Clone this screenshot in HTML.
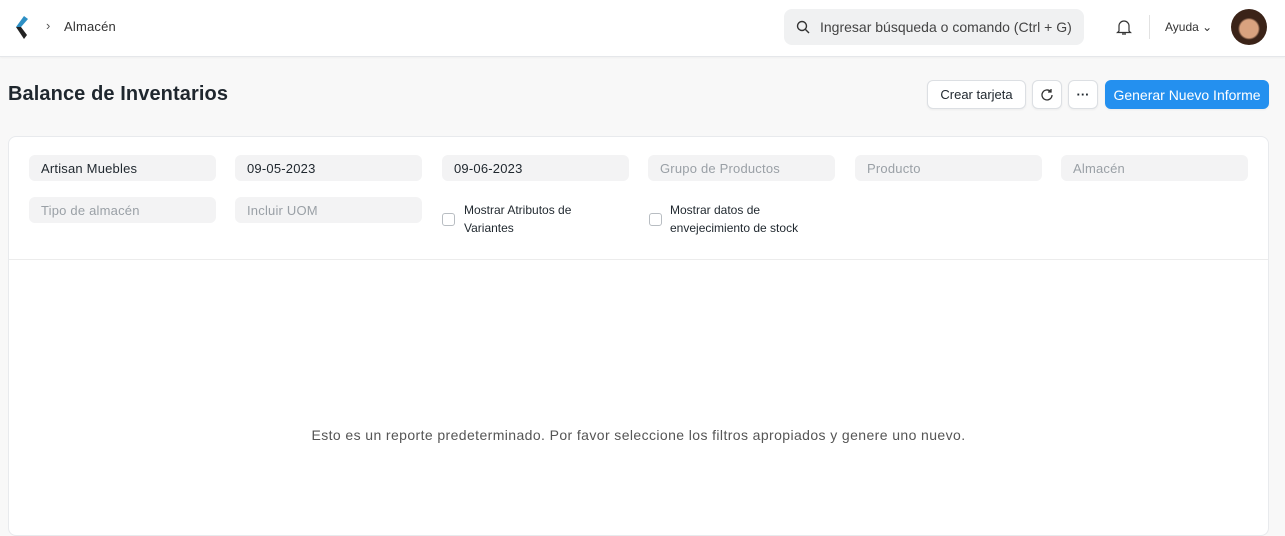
<!DOCTYPE html>
<html><head><meta charset="utf-8"><style>
*{box-sizing:border-box;margin:0;padding:0}
body{width:1285px;height:529px;overflow:hidden;background:#f8f8f8;font-family:"Liberation Sans",sans-serif;color:#1f272e;position:relative}
.nav{position:absolute;left:0;top:0;width:1285px;height:57px;background:#fff;border-bottom:1px solid #e5e7ea;box-shadow:0 1px 2px rgba(0,0,0,.04)}
.abs{position:absolute}
.btn{position:absolute;top:80px;height:29px;background:#fff;border:1px solid #dcdfe3;border-radius:6px;font-size:13px;display:flex;align-items:center;justify-content:center;box-shadow:0 1px 2px rgba(0,0,0,.05)}
.card{position:absolute;left:8px;top:136px;width:1261px;height:400px;background:#fff;border:1px solid #e8eaed;border-radius:8px}
.f{position:absolute;width:187px;height:26px;background:#f3f3f4;border-radius:6px;font-size:13px;padding:6px 12px;color:#9aa0a6;letter-spacing:.2px}
.f.v{color:#1f272e}
.cb{position:absolute;width:13px;height:13px;border:1px solid #b8bdc2;border-radius:3px;background:#fff}
.lbl{position:absolute;font-size:12px;line-height:18px;color:#1f272e}
</style></head><body>
<div class="nav">
<svg class="abs" style="left:13px;top:14px" width="16" height="26" viewBox="0 0 16 26"><path d="M11 2 L15 5 L8 13 L3 13Z" fill="#2d8fc4"/><path d="M3 13 L8 13 L14 21 L11 25Z" fill="#222"/></svg>
<div class="abs" style="left:46px;top:18px;font-size:13px;color:#555">›</div>
<div class="abs" style="left:64px;top:19px;font-size:13px;color:#333;letter-spacing:.2px">Almacén</div>
<div class="abs" style="left:784px;top:9px;width:300px;height:36px;background:#f0f1f2;border-radius:8px"></div>
<svg class="abs" style="left:796px;top:20px" width="14" height="14" viewBox="0 0 14 14"><circle cx="6" cy="6" r="4.5" fill="none" stroke="#333" stroke-width="1.4"/><path d="M9.5 9.5 L13 13" stroke="#333" stroke-width="1.4"/></svg>
<div class="abs" style="left:820px;top:19px;font-size:14px;color:#444">Ingresar búsqueda o comando (Ctrl + G)</div>
<svg class="abs" style="left:1116px;top:18px" width="16" height="18" viewBox="0 0 16 18"><path d="M3 13 V8 a5 5 0 0 1 10 0 V13 L14.5 14.5 H1.5Z M6 16 h4" fill="none" stroke="#333" stroke-width="1.2"/></svg>
<div class="abs" style="left:1149px;top:15px;width:1px;height:24px;background:#e2e2e2"></div>
<div class="abs" style="left:1165px;top:20px;font-size:12px;color:#333">Ayuda ⌄</div>
<div class="abs" style="left:1231px;top:9px;width:36px;height:36px;border-radius:50%;background:radial-gradient(circle at 50% 55%,#d9a27f 0 9px,#3b2318 11px)"></div>
</div>
<div class="abs" style="left:8px;top:83px;font-size:20px;font-weight:bold;letter-spacing:.1px">Balance de Inventarios</div>
<div class="btn" style="left:927px;width:99px">Crear tarjeta</div>
<div class="btn" style="left:1032px;width:30px"><svg width="14" height="14" viewBox="0 0 14 14"><path d="M12 7 a5 5 0 1 1 -1.5 -3.6 M11 1 V4 H8" fill="none" stroke="#333" stroke-width="1.3"/></svg></div>
<div class="btn" style="left:1068px;width:30px;font-weight:bold">···</div>
<div class="btn" style="left:1105px;width:164px;background:#2490ef;border-color:#2490ef;color:#fff;font-size:14px">Generar Nuevo Informe</div>
<div class="card">
<div class="f v" style="left:20px;top:18px">Artisan Muebles</div>
<div class="f v" style="left:226px;top:18px">09-05-2023</div>
<div class="f v" style="left:433px;top:18px">09-06-2023</div>
<div class="f" style="left:639px;top:18px">Grupo de Productos</div>
<div class="f" style="left:846px;top:18px">Producto</div>
<div class="f" style="left:1052px;top:18px">Almacén</div>
<div class="f" style="left:20px;top:60px">Tipo de almacén</div>
<div class="f" style="left:226px;top:60px">Incluir UOM</div>
<div class="cb" style="left:433px;top:76px"></div>
<div class="lbl" style="left:455px;top:64px">Mostrar Atributos de<br>Variantes</div>
<div class="cb" style="left:640px;top:76px"></div>
<div class="lbl" style="left:661px;top:64px">Mostrar datos de<br>envejecimiento de stock</div>
<div class="abs" style="left:0;top:122px;width:1259px;height:1px;background:#ececec"></div>
<div class="abs" style="left:0;top:290px;width:1259px;text-align:center;font-size:14px;color:#555;letter-spacing:.4px">Esto es un reporte predeterminado. Por favor seleccione los filtros apropiados y genere uno nuevo.</div>
</div>
</body></html>
